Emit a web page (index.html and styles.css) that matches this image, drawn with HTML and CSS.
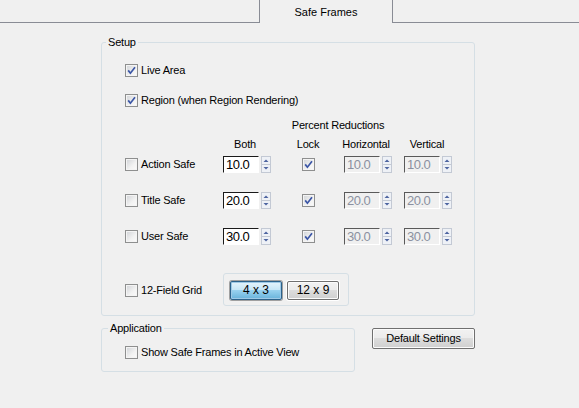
FILE: index.html
```html
<!DOCTYPE html>
<html>
<head>
<meta charset="utf-8">
<link rel="stylesheet" href="styles.css">
</head>
<body>
<div class="tabbar">
  <div class="tabline tabline-left"></div>
  <div class="tab">Safe Frames</div>
  <div class="tabline"></div>
</div>

<div class="page">
  <fieldset class="group setup">
    <legend>Setup</legend>
    <div class="setup-body">
      <div class="check-row first">
        <span class="cb"><svg width="13" height="13" viewBox="0 0 13 13"><path d="M3.2 6.4 L5.4 9.2 L10 3.2" fill="none" stroke="#3b56a6" stroke-width="1.7"/></svg></span>
        <span class="lbl">Live Area</span>
      </div>
      <div class="check-row second">
        <span class="cb"><svg width="13" height="13" viewBox="0 0 13 13"><path d="M3.2 6.4 L5.4 9.2 L10 3.2" fill="none" stroke="#3b56a6" stroke-width="1.7"/></svg></span>
        <span class="lbl">Region (when Region Rendering)</span>
      </div>

      <div class="grid hdr1">
        <span class="pr">Percent Reductions</span>
      </div>
      <div class="grid hdr2">
        <span class="h-both">Both</span>
        <span class="h-lock">Lock</span>
        <span class="h-hor">Horizontal</span>
        <span class="h-ver">Vertical</span>
      </div>

      <div class="grid vrow r1">
        <div class="check-row"><span class="cb"></span><span class="lbl">Action Safe</span></div>
        <div class="spin-field"><span class="num">10.0</span><svg class="spin" width="10" height="17" viewBox="0 0 10 17"><rect x="0.5" y="0.5" width="9" height="16" fill="#eef1f6" stroke="#c3c9d4"/><line x1="1" y1="8.5" x2="9" y2="8.5" stroke="#c3c9d4"/><path d="M2.5 6 L5 3.5 L7.5 6 Z" fill="#4d64a0"/><path d="M2.5 11 L5 13.5 L7.5 11 Z" fill="#4d64a0"/></svg></div>
        <span class="cb lock"><svg width="13" height="13" viewBox="0 0 13 13"><path d="M3.2 6.4 L5.4 9.2 L10 3.2" fill="none" stroke="#3b56a6" stroke-width="1.7"/></svg></span>
        <div class="spin-field"><span class="num off">10.0</span><svg class="spin" width="10" height="17" viewBox="0 0 10 17"><rect x="0.5" y="0.5" width="9" height="16" fill="#eef1f6" stroke="#c3c9d4"/><line x1="1" y1="8.5" x2="9" y2="8.5" stroke="#c3c9d4"/><path d="M2.5 6 L5 3.5 L7.5 6 Z" fill="#4d64a0"/><path d="M2.5 11 L5 13.5 L7.5 11 Z" fill="#4d64a0"/></svg></div>
        <div class="spin-field"><span class="num off">10.0</span><svg class="spin" width="10" height="17" viewBox="0 0 10 17"><rect x="0.5" y="0.5" width="9" height="16" fill="#eef1f6" stroke="#c3c9d4"/><line x1="1" y1="8.5" x2="9" y2="8.5" stroke="#c3c9d4"/><path d="M2.5 6 L5 3.5 L7.5 6 Z" fill="#4d64a0"/><path d="M2.5 11 L5 13.5 L7.5 11 Z" fill="#4d64a0"/></svg></div>
      </div>

      <div class="grid vrow r2">
        <div class="check-row"><span class="cb"></span><span class="lbl">Title Safe</span></div>
        <div class="spin-field"><span class="num">20.0</span><svg class="spin" width="10" height="17" viewBox="0 0 10 17"><rect x="0.5" y="0.5" width="9" height="16" fill="#eef1f6" stroke="#c3c9d4"/><line x1="1" y1="8.5" x2="9" y2="8.5" stroke="#c3c9d4"/><path d="M2.5 6 L5 3.5 L7.5 6 Z" fill="#4d64a0"/><path d="M2.5 11 L5 13.5 L7.5 11 Z" fill="#4d64a0"/></svg></div>
        <span class="cb lock"><svg width="13" height="13" viewBox="0 0 13 13"><path d="M3.2 6.4 L5.4 9.2 L10 3.2" fill="none" stroke="#3b56a6" stroke-width="1.7"/></svg></span>
        <div class="spin-field"><span class="num off">20.0</span><svg class="spin" width="10" height="17" viewBox="0 0 10 17"><rect x="0.5" y="0.5" width="9" height="16" fill="#eef1f6" stroke="#c3c9d4"/><line x1="1" y1="8.5" x2="9" y2="8.5" stroke="#c3c9d4"/><path d="M2.5 6 L5 3.5 L7.5 6 Z" fill="#4d64a0"/><path d="M2.5 11 L5 13.5 L7.5 11 Z" fill="#4d64a0"/></svg></div>
        <div class="spin-field"><span class="num off">20.0</span><svg class="spin" width="10" height="17" viewBox="0 0 10 17"><rect x="0.5" y="0.5" width="9" height="16" fill="#eef1f6" stroke="#c3c9d4"/><line x1="1" y1="8.5" x2="9" y2="8.5" stroke="#c3c9d4"/><path d="M2.5 6 L5 3.5 L7.5 6 Z" fill="#4d64a0"/><path d="M2.5 11 L5 13.5 L7.5 11 Z" fill="#4d64a0"/></svg></div>
      </div>

      <div class="grid vrow r3">
        <div class="check-row"><span class="cb"></span><span class="lbl">User Safe</span></div>
        <div class="spin-field"><span class="num">30.0</span><svg class="spin" width="10" height="17" viewBox="0 0 10 17"><rect x="0.5" y="0.5" width="9" height="16" fill="#eef1f6" stroke="#c3c9d4"/><line x1="1" y1="8.5" x2="9" y2="8.5" stroke="#c3c9d4"/><path d="M2.5 6 L5 3.5 L7.5 6 Z" fill="#4d64a0"/><path d="M2.5 11 L5 13.5 L7.5 11 Z" fill="#4d64a0"/></svg></div>
        <span class="cb lock"><svg width="13" height="13" viewBox="0 0 13 13"><path d="M3.2 6.4 L5.4 9.2 L10 3.2" fill="none" stroke="#3b56a6" stroke-width="1.7"/></svg></span>
        <div class="spin-field"><span class="num off">30.0</span><svg class="spin" width="10" height="17" viewBox="0 0 10 17"><rect x="0.5" y="0.5" width="9" height="16" fill="#eef1f6" stroke="#c3c9d4"/><line x1="1" y1="8.5" x2="9" y2="8.5" stroke="#c3c9d4"/><path d="M2.5 6 L5 3.5 L7.5 6 Z" fill="#4d64a0"/><path d="M2.5 11 L5 13.5 L7.5 11 Z" fill="#4d64a0"/></svg></div>
        <div class="spin-field"><span class="num off">30.0</span><svg class="spin" width="10" height="17" viewBox="0 0 10 17"><rect x="0.5" y="0.5" width="9" height="16" fill="#eef1f6" stroke="#c3c9d4"/><line x1="1" y1="8.5" x2="9" y2="8.5" stroke="#c3c9d4"/><path d="M2.5 6 L5 3.5 L7.5 6 Z" fill="#4d64a0"/><path d="M2.5 11 L5 13.5 L7.5 11 Z" fill="#4d64a0"/></svg></div>
      </div>

      <div class="grid field-grid">
        <div class="check-row"><span class="cb"></span><span class="lbl">12-Field Grid</span></div>
        <div class="btn-group">
          <span class="btn active">4 x 3</span>
          <span class="btn">12 x 9</span>
        </div>
      </div>
    </div>
  </fieldset>

  <div class="bottom">
    <fieldset class="group app">
      <legend>Application</legend>
      <div class="app-body">
        <div class="check-row"><span class="cb"></span><span class="lbl">Show Safe Frames in Active View</span></div>
      </div>
    </fieldset>
    <span class="btn default">Default Settings</span>
  </div>
</div>
</body>
</html>
```

FILE: styles.css
```css
html, body {
  margin: 0;
  padding: 0;
  background: #f0f0f0;
}
body {
  font-family: "Liberation Sans", Arial, sans-serif;
  font-size: 11px;
  letter-spacing: -0.2px;
  color: #000;
  width: 579px;
  height: 408px;
  overflow: hidden;
}

/* tab strip */
.tabbar {
  display: flex;
  height: 23px;
}
.tabline {
  flex: 1;
  border-bottom: 1px solid #898c95;
}
.tabline-left {
  flex: 0 0 259px;
}
.tab {
  flex: 0 0 134px;
  box-sizing: border-box;
  border-left: 1px solid #898c95;
  border-right: 1px solid #898c95;
  text-align: center;
  line-height: 24px;
  letter-spacing: 0;
}

/* page */
.page {
  padding: 13px 0 0 101px;
}
.group {
  margin: 0;
  padding: 0;
  border: 1px solid #d5dfe5;
  border-radius: 3px;
  box-sizing: border-box;
  min-width: 0;
}
.group legend {
  margin-left: 4px;
  padding: 0 2px;
  line-height: 13px;
  height: 13px;
}
.setup {
  width: 374px;
}
.setup-body {
  padding: 15px 0 9px 23px;
}

.check-row {
  display: flex;
  align-items: center;
  height: 13px;
}
.check-row.second {
  margin-top: 17px;
}
.lbl {
  margin-left: 3px;
  line-height: 13px;
  white-space: nowrap;
}
.cb {
  display: block;
  flex: 0 0 auto;
  width: 13px;
  height: 13px;
  box-sizing: border-box;
  border: 1px solid #8e8f8f;
  background: linear-gradient(135deg, #cfd2d6 0%, #f2f2f2 60%, #fbfbfb 100%);
  box-shadow: inset 0 0 0 1px #f4f4f4;
}
.cb svg {
  display: block;
  margin: -1px 0 0 -1px;
}

/* table grid */
.grid {
  display: grid;
  grid-template-columns: 98px 49px 72px 60px 50px;
  align-items: center;
}
.hdr1 {
  margin-top: 12px;
  height: 13px;
  line-height: 13px;
}
.pr {
  grid-column: 3 / 5;
  justify-self: center;
}
.hdr2 {
  margin-top: 6px;
  height: 13px;
  line-height: 13px;
}
.h-both { grid-column: 2; justify-self: center; margin-right: 5px; }
.h-lock { grid-column: 3; justify-self: center; }
.h-hor { grid-column: 4; justify-self: center; margin-right: 16px; }
.h-ver { grid-column: 5; justify-self: center; margin-right: 4px; }

.vrow {
  height: 17px;
}
.r1 { margin-top: 5px; }
.r2 { margin-top: 19px; }
.r3 { margin-top: 19px; }
.cb.lock {
  justify-self: center;
}

.spin-field {
  display: flex;
  align-items: center;
}
.num {
  display: block;
  width: 36px;
  height: 17px;
  box-sizing: border-box;
  border: 1px solid;
  border-color: #1a1a1a #fff #fff #1a1a1a;
  background: #fff;
  padding-left: 2px;
  font-size: 13px;
  letter-spacing: -0.5px;
  line-height: 15px;
  color: #000;
}
.num.off {
  background: #f0f0f0;
  border-color: #5a5a5a #fff #fff #5a5a5a;
  color: #8b90a0;
}
.spin {
  display: block;
  margin-left: 2px;
}

/* 12-field grid */
.field-grid {
  margin-top: 28px;
  height: 33px;
}
.field-grid .check-row {
  margin-top: 2px;
}
.btn-group {
  grid-column: 2 / 5;
  width: 126px;
  height: 33px;
  box-sizing: border-box;
  border: 1px solid #d5dfe5;
  border-radius: 3px;
  display: flex;
  gap: 5px;
  padding: 7px 0 0 6px;
}
.btn {
  display: block;
  box-sizing: border-box;
  width: 52px;
  height: 19px;
  border: 1px solid #707070;
  border-radius: 2px;
  background: linear-gradient(#f2f2f2 0%, #ebebeb 50%, #dddddd 50%, #cfcfcf 100%);
  box-shadow: inset 0 0 0 1px #fbfbfb, 0 0 0 1px #ffffff;
  text-align: center;
  line-height: 17px;
  font-size: 12px;
  letter-spacing: 0;
}
.btn.active {
  border-color: #2c628b;
  background: linear-gradient(#e5f4fc 0%, #c4e5f6 50%, #98d1ef 50%, #68b3db 100%);
  box-shadow: inset 0 0 0 1px #9ec9e6, 0 0 0 1px #a0a0a0;
}

/* bottom row */
.bottom {
  display: flex;
  align-items: flex-start;
  margin-top: 6px;
}
.app {
  width: 254px;
}
.app-body {
  padding: 11px 0 12px 23px;
}
.app legend {
  margin-left: 6px;
}
.btn.default {
  margin: 6px 0 0 17px;
  width: 103px;
  height: 21px;
  line-height: 19px;
  font-size: 11px;
  letter-spacing: -0.2px;
  box-shadow: inset 0 0 0 1px #fbfbfb;
}
```
